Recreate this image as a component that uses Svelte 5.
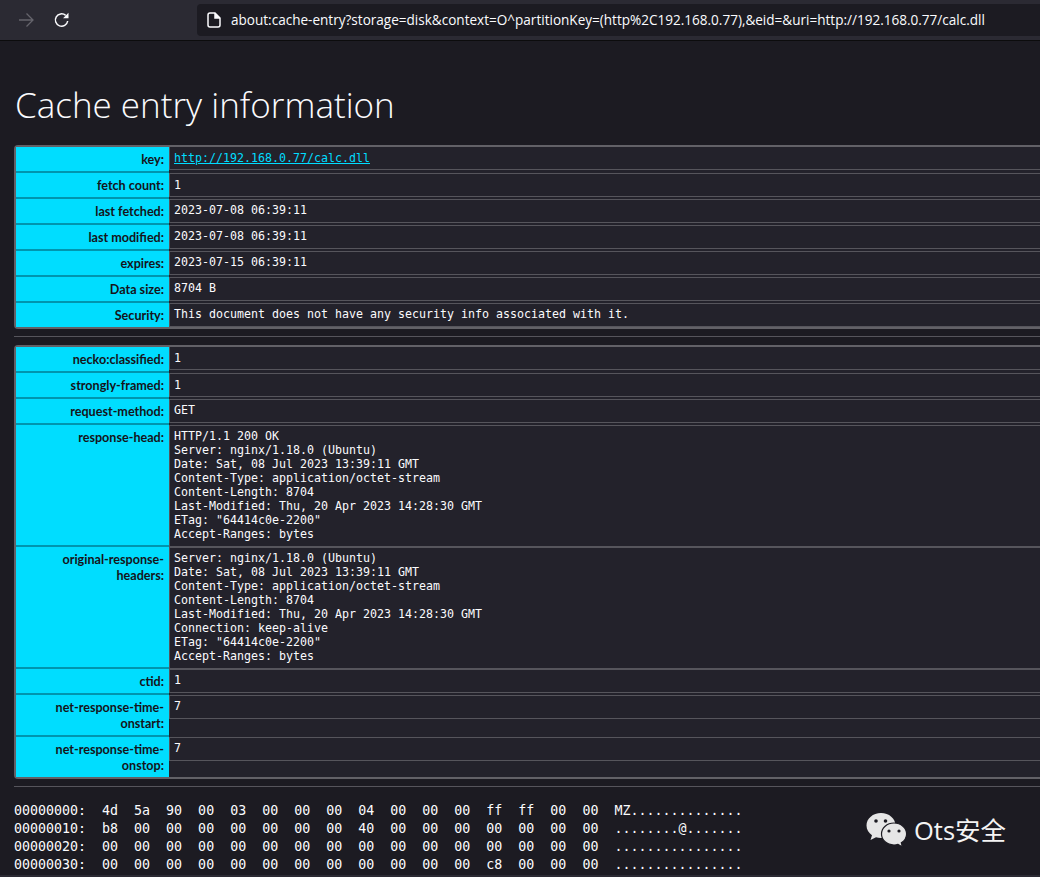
<script>
  const table1 = [
    { k: 'key:', v: 'http://192.168.0.77/calc.dll', link: true },
    { k: 'fetch count:', v: '1' },
    { k: 'last fetched:', v: '2023-07-08 06:39:11' },
    { k: 'last modified:', v: '2023-07-08 06:39:11' },
    { k: 'expires:', v: '2023-07-15 06:39:11' },
    { k: 'Data size:', v: '8704 B' },
    { k: 'Security:', v: 'This document does not have any security info associated with it.' }
  ];
  const table2 = [
    { k: 'necko:classified:', v: '1' },
    { k: 'strongly-framed:', v: '1' },
    { k: 'request-method:', v: 'GET' },
    { k: 'response-head:', v: `HTTP/1.1 200 OK
Server: nginx/1.18.0 (Ubuntu)
Date: Sat, 08 Jul 2023 13:39:11 GMT
Content-Type: application/octet-stream
Content-Length: 8704
Last-Modified: Thu, 20 Apr 2023 14:28:30 GMT
ETag: "64414c0e-2200"
Accept-Ranges: bytes` },
    { k: 'original-response-headers:', v: `Server: nginx/1.18.0 (Ubuntu)
Date: Sat, 08 Jul 2023 13:39:11 GMT
Content-Type: application/octet-stream
Content-Length: 8704
Last-Modified: Thu, 20 Apr 2023 14:28:30 GMT
Connection: keep-alive
ETag: "64414c0e-2200"
Accept-Ranges: bytes` },
    { k: 'ctid:', v: '1' },
    { k: 'net-response-time-onstart:', v: '7' },
    { k: 'net-response-time-onstop:', v: '7' }
  ];
  const hex = `00000000:  4d  5a  90  00  03  00  00  00  04  00  00  00  ff  ff  00  00  MZ..............
00000010:  b8  00  00  00  00  00  00  00  40  00  00  00  00  00  00  00  ........@.......
00000020:  00  00  00  00  00  00  00  00  00  00  00  00  00  00  00  00  ................
00000030:  00  00  00  00  00  00  00  00  00  00  00  00  c8  00  00  00  ................`;
  const url = 'about:cache-entry?storage=disk&context=O^partitionKey=(http%2C192.168.0.77),&eid=&uri=http://192.168.0.77/calc.dll';
  const tables = [table1, table2];
</script>

<div class="window">
  <header class="toolbar">
    <svg class="ico fwd" width="18" height="18" viewBox="0 0 18 18" fill="none" stroke="#65646c" stroke-width="1.3">
      <path d="M2 9h13.500M9.500 2.500 16 9l-6.500 6.500" />
    </svg>
    <svg class="ico reload" width="18" height="18" viewBox="0 0 18 18" fill="none">
      <path d="M14.700 10a6.200 6.200 0 1 1-2-5.600" stroke="#fbfbfe" stroke-width="1.500" />
      <path d="M15.500 1.800v5.400h-5.400z" fill="#fbfbfe" />
    </svg>
    <div class="urlbar">
      <svg width="14" height="16" viewBox="0 0 14 16" fill="none" stroke="#fbfbfe" stroke-width="1.500">
        <path d="M3 1h5l5 5v7a2 2 0 0 1-2 2H3a2 2 0 0 1-2-2V3a2 2 0 0 1 2-2z" />
        <path d="M8 1v5h5" fill="#fbfbfe" />
      </svg>
      <span class="url">{url}</span>
    </div>
  </header>

  <main class="page">
    <h1>Cache entry information</h1>
    {#each tables as rows}
      <table>
        <tbody>
          {#each rows as row}
            <tr>
              <th>{row.k}</th>
              <td>
                <pre class="val">{#if row.link}<a href={row.v}>{row.v}</a>{:else}{row.v}{/if}</pre>
              </td>
            </tr>
          {/each}
        </tbody>
      </table>
      <hr />
    {/each}
    <pre class="hex">{hex}</pre>
  </main>

  <div class="mark">
    <svg width="42" height="36" viewBox="0 0 42 36">
      <path d="M15 1C7 1 0.500 6.500 0.500 13.500c0 4 2.200 7.500 5.500 9.800L4.500 28l5.500-2.800c1.600.5 3.300.8 5 .8 8 0 14.500-5.500 14.500-12.500S23 1 15 1z" fill="#e6e6e6" />
      <path d="M28 11c-7 0-12.500 4.800-12.500 11s5.500 11 12.500 11c1.400 0 2.700-.2 4-.6l4.500 2.600-1.200-4.200c3.300-2 5.300-5.200 5.300-8.800 0-6.200-5.600-11-12.600-11z" fill="#e6e6e6" stroke="#1c1b22" stroke-width="1.200" />
      <circle cx="10" cy="9" r="1.800" fill="#1c1b22" />
      <circle cx="19.500" cy="9" r="1.800" fill="#1c1b22" />
      <circle cx="23" cy="19" r="1.600" fill="#1c1b22" />
      <circle cx="33" cy="19" r="1.600" fill="#1c1b22" />
    </svg>
    <span>Ots安全</span>
  </div>
  <div class="edge"></div>
</div>

<style>
  :global(body) {
    margin: 0;
    background: #1c1b22;
  }
  .window {
    position: relative;
    height: 877px;
    overflow: hidden;
    background: #1c1b22;
    color: #fbfbfe;
    font-family: "Open Sans", "Noto Sans", sans-serif;
  }
  .toolbar {
    display: flex;
    align-items: center;
    height: 40px;
    background: #2b2a33;
    border-bottom: 1px solid #0c0c0d;
  }
  .ico {
    flex: none;
  }
  .fwd {
    margin-left: 17px;
  }
  .reload {
    margin-left: 18px;
  }
  .urlbar {
    display: flex;
    align-items: center;
    gap: 10px;
    flex: 1;
    height: 32px;
    margin-left: 126px;
    padding-left: 10px;
    background: #1c1b22;
    border-radius: 4px 0 0 4px;
  }
  .url {
    font-size: 13.55px;
    white-space: nowrap;
    color: #fbfbfe;
  }
  .page {
    padding: 0 0 0 14px;
  }
  h1 {
    margin: 41px 0 17px 1px;
    font-size: 35px;
    line-height: 46px;
    font-weight: 300;
    color: #fbfbfe;
  }
  table {
    width: 1060px;
    border-collapse: separate;
    border-spacing: 0;
    border: 2px solid #626167;
    border-right: 0;
    border-radius: 4px 0 0 4px;
    table-layout: fixed;
  }
  th {
    width: 148px;
    padding: 5px 5px 3px 0;
    background: #00ddff;
    border-bottom: 2px solid #0095ae;
    color: #15141a;
    font-family: Lato, "Open Sans", sans-serif;
    font-size: 12.6px;
    line-height: 16px;
    font-weight: 700;
    text-align: right;
    vertical-align: top;
  }
  tr:last-child th {
    border-bottom: 0;
  }
  td {
    padding: 0;
    background: #23222b;
    border-top: 1px solid #56555c;
    vertical-align: top;
  }
  tr:first-child td {
    border-top: 0;
  }
  .val {
    margin: 0;
    padding: 4px 5px 4px 4px;
    border-left: 1px solid #56555c;
    border-bottom: 1px solid #56555c;
    font-family: "DejaVu Sans Mono", monospace;
    font-size: 11.63px;
    line-height: 14px;
    color: #fbfbfe;
  }
  tr:nth-child(n + 3) .val {
    padding: 3px 5px 5px 4px;
  }
  a {
    color: #00ddff;
    text-decoration: underline;
  }
  hr {
    height: 1px;
    margin: 7px 0 8px;
    border: 0;
    background: #56555c;
  }
  .hex {
    margin: 15px 0 0;
    font-family: "DejaVu Sans Mono", monospace;
    font-size: 13.3px;
    line-height: 18px;
    color: #fbfbfe;
  }
  .mark {
    position: absolute;
    left: 866px;
    top: 810px;
    display: flex;
    align-items: center;
    gap: 6px;
    color: #f4f4f4;
    font-family: "Open Sans", "Noto Sans CJK SC", sans-serif;
    font-size: 25.5px;
    line-height: 40px;
  }
  .edge {
    position: absolute;
    left: 0;
    right: 0;
    bottom: 0;
    height: 2px;
    background: #2b2a33;
  }
</style>
